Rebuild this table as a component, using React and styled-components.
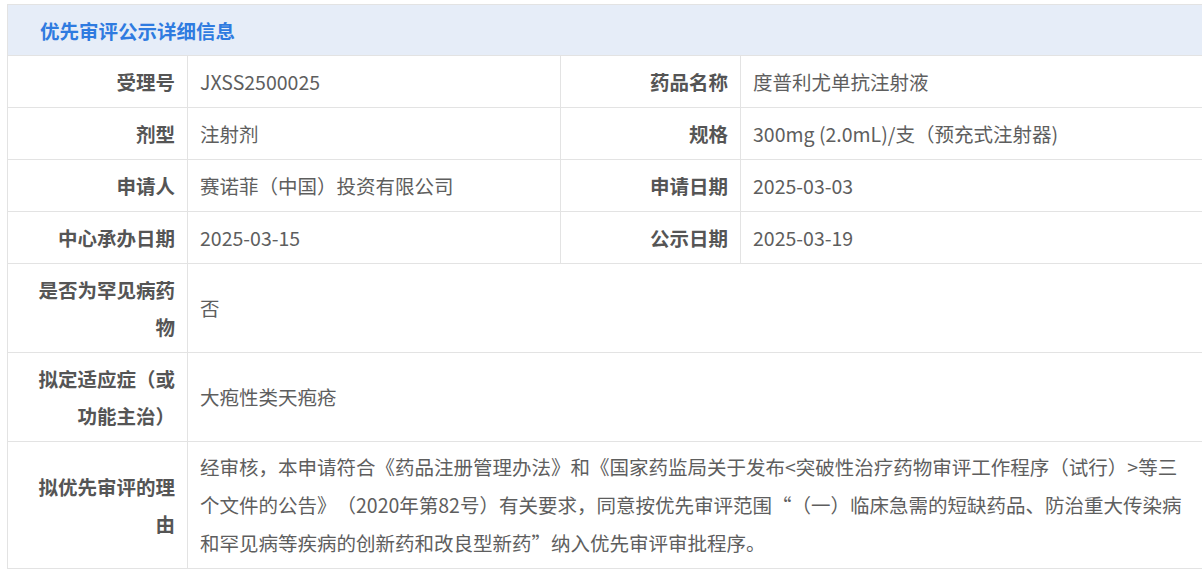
import React from "react";
import styled, { createGlobalStyle } from "styled-components";

const Global = createGlobalStyle`
  html, body {
    margin: 0;
    padding: 0;
    background: #fff;
    overflow: hidden;
  }
  body {
    font-family: "Noto Sans CJK SC", "Noto Sans", sans-serif;
    text-spacing-trim: space-all;
  }
`;

const Page = styled.div`
  padding: 4px 0 0 7px;
`;

const Table = styled.table`
  width: 1197px;
  border-collapse: collapse;
  table-layout: fixed;
  font-size: 19.5px;
  color: #555;
`;

const HeaderCell = styled.th`
  height: 50px;
  padding: 0 0 0 32px;
  background: #e6edf8;
  border: 1px solid #e3e3e3;
  text-align: left;
  color: #2f7be0;
  font-size: 19.5px;
  font-weight: 700;
`;

const Label = styled.td`
  padding: 7px 12px 7px 20px;
  border: 1px solid #e3e3e3;
  text-align: right;
  font-weight: 700;
  line-height: 37px;
  color: #555;
  vertical-align: middle;
`;

const Value = styled.td`
  padding: 6px 12px 6px 12px;
  border: 1px solid #e3e3e3;
  text-align: left;
  line-height: 38px;
  color: #5e5e5e;
  vertical-align: middle;
  text-spacing-trim: space-all;
`;

const Col = styled.col`
  width: ${(p) => p.w}px;
`;

const pairs = [
  ["受理号", "JXSS2500025", "药品名称", "度普利尤单抗注射液"],
  ["剂型", "注射剂", "规格", "300mg (2.0mL)/支（预充式注射器)"],
  ["申请人", "赛诺菲（中国）投资有限公司", "申请日期", "2025-03-03"],
  ["中心承办日期", "2025-03-15", "公示日期", "2025-03-19"],
];

const singles = [
  ["是否为罕见病药物", "否"],
  ["拟定适应症（或功能主治）", "大疱性类天疱疮"],
  [
    "拟优先审评的理由",
    "经审核，本申请符合《药品注册管理办法》和《国家药监局关于发布<突破性治疗药物审评工作程序（试行）>等三个文件的公告》（2020年第82号）有关要求，同意按优先审评范围“（一）临床急需的短缺药品、防治重大传染病和罕见病等疾病的创新药和改良型新药”纳入优先审评审批程序。",
  ],
];

export default function App() {
  return (
    <Page>
      <Global />
      <Table>
        <colgroup>
          <Col w={180} />
          <Col w={373} />
          <Col w={180} />
          <Col w={464} />
        </colgroup>
        <thead>
          <tr>
            <HeaderCell colSpan={4}>优先审评公示详细信息</HeaderCell>
          </tr>
        </thead>
        <tbody>
          {pairs.map(([l1, v1, l2, v2]) => (
            <tr key={l1}>
              <Label>{l1}</Label>
              <Value>{v1}</Value>
              <Label>{l2}</Label>
              <Value>{v2}</Value>
            </tr>
          ))}
          {singles.map(([l, v]) => (
            <tr key={l}>
              <Label>{l}</Label>
              <Value colSpan={3}>{v}</Value>
            </tr>
          ))}
        </tbody>
      </Table>
    </Page>
  );
}
